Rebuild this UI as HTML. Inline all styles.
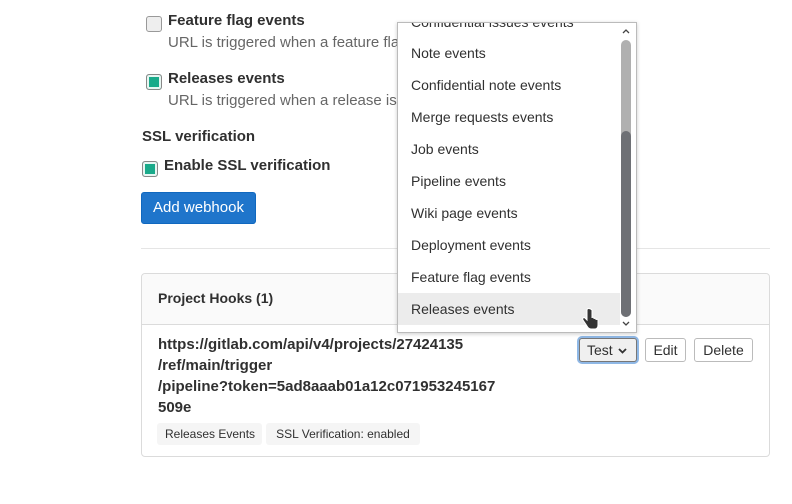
<!DOCTYPE html>
<html><head><style>
body{margin:0;width:792px;height:504px;background:#fff;font-family:"Liberation Sans",sans-serif;color:#303030;position:relative;overflow:hidden;font-size:14px}
.a{position:absolute;white-space:nowrap}
.cb{position:absolute;width:14px;height:14px;border:1px solid #999;border-radius:3px;background:#eee}
.cb.on{background:#1aaa8a;border-color:#888;box-shadow:inset 0 0 0 2px #e8f6f2}
b{font-weight:bold}
.g{color:#666}
.btn{position:absolute;border:1px solid #bbb;border-radius:3px;background:#fff;font-size:14px;text-align:center;line-height:22px;box-sizing:border-box;height:24px}
.it{position:absolute;left:0;width:222px;height:32px;line-height:32px;padding-left:13px;box-sizing:border-box;font-size:14px;white-space:nowrap}
.tag{position:absolute;top:423px;height:22px;line-height:22px;background:#f5f5f5;font-size:12px;padding:0 8px;box-sizing:border-box;border-radius:3px;white-space:nowrap;text-align:center}
</style></head><body>
<div class="cb" style="left:146px;top:16px"></div>
<div class="a" style="left:168px;top:12px;font-size:15px"><b>Feature flag events</b></div>
<div class="a g" style="left:168px;top:34px;font-size:15px">URL is triggered when a feature flag is toggled</div>
<div class="cb on" style="left:146px;top:74px"></div>
<div class="a" style="left:168px;top:70px;font-size:15px"><b>Releases events</b></div>
<div class="a g" style="left:168px;top:92px;font-size:15px">URL is triggered when a release is created</div>
<div class="a" style="left:142px;top:128px;font-size:15px"><b>SSL verification</b></div>
<div class="cb on" style="left:142px;top:161px"></div>
<div class="a" style="left:164px;top:157px;font-size:15px"><b>Enable SSL verification</b></div>
<div class="a" style="left:141px;top:192px;width:115px;height:32px;background:#1f75cb;border-radius:3px;color:#fff;line-height:30px;text-align:center;border:1px solid #1068bf;box-sizing:border-box;font-size:15px">Add webhook</div>
<div class="a" style="left:141px;top:248px;width:629px;height:1px;background:#e5e5e5"></div>
<div class="a" style="left:141px;top:273px;width:629px;height:184px;border:1px solid #dbdbdb;border-radius:4px;box-sizing:border-box">
 <div style="height:50px;background:#fafafa;border-bottom:1px solid #dbdbdb;border-radius:4px 4px 0 0"></div>
</div>
<div class="a" style="left:158px;top:290px"><b>Project Hooks (1)</b></div>
<div class="a" style="left:158px;top:334px;line-height:21px;font-weight:bold;font-size:15px">https://gitlab.com/api/v4/projects/27424135<br>/ref/main/trigger<br>/pipeline?token=5ad8aaab01a12c071953245167<br>509e</div>
<div class="tag" style="left:157px;width:105px">Releases Events</div>
<div class="tag" style="left:266px;width:154px">SSL Verification: enabled</div>
<div class="btn" style="left:579px;top:338px;width:58px;background:#f0f0f0;border-color:#777;box-shadow:0 0 0 2px #8fb8e6;text-align:left;padding-left:7px">Test<svg style="position:absolute;left:38px;top:9px" width="9" height="6" viewBox="0 0 9 6"><path d="M1 1l3.5 3.5L8 1" stroke="#333" stroke-width="1.8" fill="none"/></svg></div>
<div class="btn" style="left:645px;top:338px;width:41px">Edit</div>
<div class="btn" style="left:694px;top:338px;width:59px">Delete</div>
<div class="a" style="left:397px;top:22px;width:240px;height:311px;border:1px solid #bbb;background:#fff;box-shadow:0 1px 4px rgba(0,0,0,.2);overflow:hidden;box-sizing:border-box">
 <div class="it" style="top:-17px">Confidential issues events</div>
 <div class="it" style="top:14px">Note events</div>
 <div class="it" style="top:46px">Confidential note events</div>
 <div class="it" style="top:78px">Merge requests events</div>
 <div class="it" style="top:110px">Job events</div>
 <div class="it" style="top:142px">Pipeline events</div>
 <div class="it" style="top:174px">Wiki page events</div>
 <div class="it" style="top:206px">Deployment events</div>
 <div class="it" style="top:238px">Feature flag events</div>
 <div class="it" style="top:270px;background:#ececec">Releases events</div>
 <div style="position:absolute;left:223px;top:17px;width:10px;height:277px;background:#b0b0b0;border-radius:5px"></div>
 <div style="position:absolute;left:223px;top:108px;width:10px;height:186px;background:#6e7075;border-radius:5px"></div>
 <svg style="position:absolute;left:224px;top:6px" width="8" height="5" viewBox="0 0 8 5"><path d="M1 4l3-3 3 3" stroke="#444" stroke-width="1.3" fill="none"/></svg>
 <svg style="position:absolute;left:224px;top:298px" width="8" height="5" viewBox="0 0 8 5"><path d="M1 1l3 3 3-3" stroke="#444" stroke-width="1.3" fill="none"/></svg>
</div>
<svg class="a" style="left:582px;top:308px" width="18" height="22" viewBox="0 0 18 22"><path d="M5 2v10l-2-2c-1-1-3 0-2 2l4 6c1 2 2 3 4 3h4c2 0 3-2 3-4v-5c0-1-2-1-2 0v-1c0-1-2-1-2 0v-1c0-1-2-1-2 0V2C8 0 5 0 5 2z" fill="#333" stroke="#fff" stroke-width="1"/></svg>
</body></html>
